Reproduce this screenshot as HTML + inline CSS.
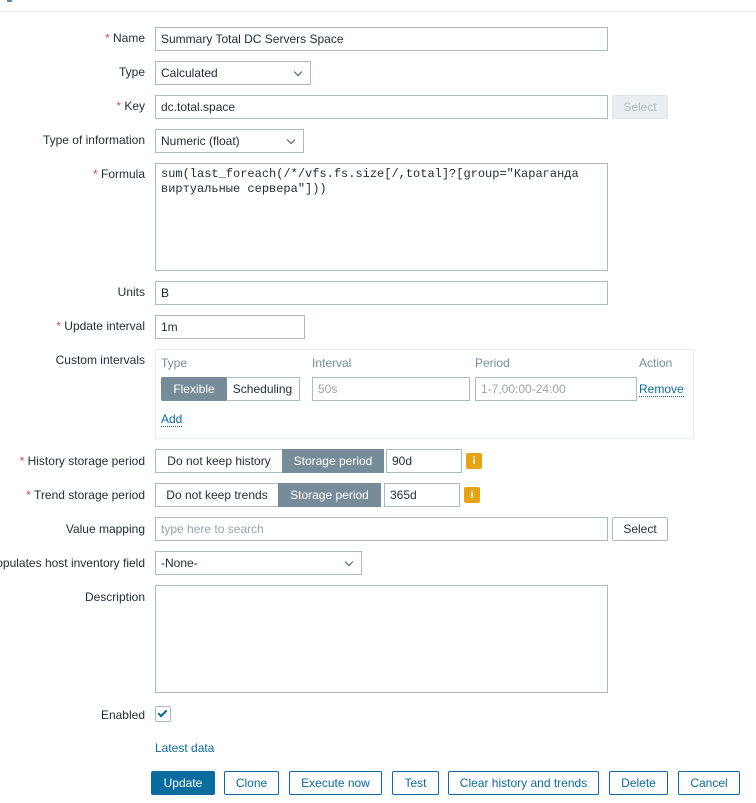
<!DOCTYPE html>
<html><head><meta charset="utf-8"><style>
*{box-sizing:border-box;margin:0;padding:0}
body{width:756px;height:803px;background:#fff;font-family:"Liberation Sans",Arial,sans-serif;font-size:12px;color:#1f2c33;position:relative;overflow:hidden}
.a{position:absolute}
.l{position:absolute;right:611px;text-align:right;white-space:nowrap;line-height:14px}
.r{color:#d64e4e}
.in{position:absolute;border:1px solid #acbbc2;background:#fff;height:24px;line-height:22px;padding-left:5px;white-space:nowrap;overflow:hidden}
.sel::after{content:"";position:absolute;right:9px;top:7px;width:5px;height:5px;border-right:1px solid #4b5b63;border-bottom:1px solid #4b5b63;transform:rotate(45deg)}
.btn{position:absolute;border:1px solid #0a6b9e;color:#0a6b9e;height:24px;line-height:22px;text-align:center;border-radius:2px;background:#fff}
.seg{position:absolute;height:24px;line-height:22px;text-align:center;border:1px solid #acbbc2;white-space:nowrap}
.dk{background:#768d99;color:#fff;border-color:#768d99}
.info{position:absolute;width:16px;height:16px;background:#e8a315;color:#fff;border-radius:2px;font-weight:bold;text-align:center;line-height:16px;font-size:11px}
.lnk{color:#0a6b9e;border-bottom:1px dotted #0a6b9e;position:absolute;line-height:14px}
.mono{font-family:"Liberation Mono","DejaVu Sans Mono",monospace;font-size:12px;line-height:15px;padding:3px 5px;white-space:pre}
</style></head><body>
<div class="a" style="left:0;top:11px;width:756px;height:1px;background:#e6ebed"></div>
<div class="a" style="left:7px;top:0;width:5px;height:2px;background:#5d8aa8"></div>

<div class="l" style="top:31px"><span class="r">*</span> Name</div>
<div class="in" style="left:155px;top:27px;width:453px">Summary Total DC Servers Space</div>

<div class="l" style="top:65px">Type</div>
<div class="in sel" style="left:155px;top:61px;width:156px">Calculated</div>

<div class="l" style="top:99px"><span class="r">*</span> Key</div>
<div class="in" style="left:155px;top:95px;width:453px">dc.total.space</div>
<div class="btn" style="left:612px;top:95px;width:56px;background:#ebeef0;border-color:#dfe4e7;color:#acbbc2">Select</div>

<div class="l" style="top:133px">Type of information</div>
<div class="in sel" style="left:155px;top:129px;width:149px">Numeric (float)</div>

<div class="l" style="top:167px"><span class="r">*</span> Formula</div>
<div class="in mono" style="left:155px;top:163px;width:453px;height:108px">sum(last_foreach(/*/vfs.fs.size[/,total]?[group="Караганда
виртуальные сервера"]))</div>

<div class="l" style="top:285px">Units</div>
<div class="in" style="left:155px;top:281px;width:453px">B</div>

<div class="l" style="top:319px"><span class="r">*</span> Update interval</div>
<div class="in" style="left:155px;top:315px;width:150px">1m</div>

<div class="l" style="top:353px">Custom intervals</div>
<div class="a" style="left:155px;top:349px;width:539px;height:90px;border:1px solid #e6ebed"></div>
<div class="a" style="left:161px;top:356px;color:#768d99">Type</div>
<div class="a" style="left:312px;top:356px;color:#768d99">Interval</div>
<div class="a" style="left:475px;top:356px;color:#768d99">Period</div>
<div class="a" style="left:639px;top:356px;color:#768d99">Action</div>
<div class="seg dk" style="left:161px;top:377px;width:66px;border-radius:2px 0 0 2px">Flexible</div>
<div class="seg" style="left:226px;top:377px;width:74px;border-left:none">Scheduling</div>
<div class="in" style="left:312px;top:377px;width:158px;color:#9aa5ab">50s</div>
<div class="in" style="left:475px;top:377px;width:162px;color:#9aa5ab">1-7,00:00-24:00</div>
<div class="lnk" style="left:639px;top:382px">Remove</div>
<div class="lnk" style="left:161px;top:412px">Add</div>

<div class="l" style="top:454px"><span class="r">*</span> History storage period</div>
<div class="seg" style="left:155px;top:449px;width:128px">Do not keep history</div>
<div class="seg dk" style="left:282px;top:449px;width:102px">Storage period</div>
<div class="in" style="left:386px;top:449px;width:76px">90d</div>
<div class="info" style="left:466px;top:453px">i</div>

<div class="l" style="top:488px"><span class="r">*</span> Trend storage period</div>
<div class="seg" style="left:155px;top:483px;width:124px">Do not keep trends</div>
<div class="seg dk" style="left:278px;top:483px;width:103px">Storage period</div>
<div class="in" style="left:384px;top:483px;width:76px">365d</div>
<div class="info" style="left:464px;top:487px">i</div>

<div class="l" style="top:522px">Value mapping</div>
<div class="in" style="left:155px;top:517px;width:453px;color:#9aa5ab">type here to search</div>
<div class="btn" style="left:612px;top:517px;width:56px;border-color:#acbbc2;color:#1f2c33">Select</div>

<div class="l" style="top:556px">Populates host inventory field</div>
<div class="in sel" style="left:155px;top:551px;width:207px">-None-</div>

<div class="l" style="top:590px">Description</div>
<div class="in" style="left:155px;top:585px;width:453px;height:108px"></div>

<div class="l" style="top:708px">Enabled</div>
<div class="a" style="left:155px;top:706px;width:16px;height:16px;border:1px solid #acbbc2;border-radius:2px"></div>
<div class="a" style="left:160px;top:708px;width:5px;height:9px;border-right:2px solid #0a6b9e;border-bottom:2px solid #0a6b9e;transform:rotate(45deg)"></div>

<div class="a" style="left:155px;top:741px;color:#0a6b9e">Latest data</div>

<div class="btn" style="left:151px;top:771px;width:64px;background:#0a6b9e;color:#fff">Update</div>
<div class="btn" style="left:224px;top:771px;width:55px">Clone</div>
<div class="btn" style="left:289px;top:771px;width:93px">Execute now</div>
<div class="btn" style="left:392px;top:771px;width:47px">Test</div>
<div class="btn" style="left:448px;top:771px;width:151px">Clear history and trends</div>
<div class="btn" style="left:609px;top:771px;width:59px">Delete</div>
<div class="btn" style="left:678px;top:771px;width:62px">Cancel</div>
</body></html>
